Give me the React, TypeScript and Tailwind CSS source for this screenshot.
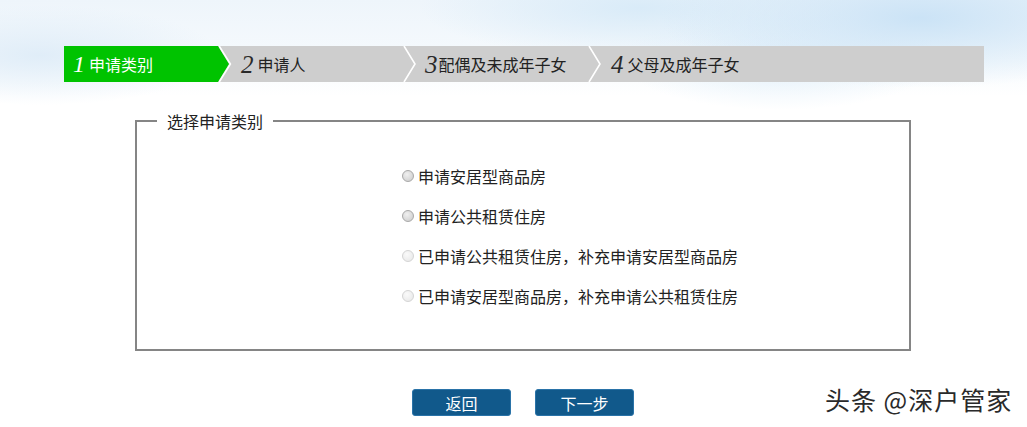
import React from "react";

const cjk = "font-['Microsoft_YaHei','Noto_Sans_CJK_SC',sans-serif]";

const steps = [
  { n: "2", label: "申请人", w: "w-[185px]", pl: "pl-[23px]", gap: "mr-[4px]" },
  { n: "3", label: "配偶及未成年子女", w: "w-[185px]", pl: "pl-[22px]", gap: "mr-[1px]" },
  { n: "4", label: "父母及成年子女", w: "flex-1", pl: "pl-[23px]", gap: "mr-[4px]" },
];

const options = [
  { label: "申请安居型商品房", disabled: false },
  { label: "申请公共租赁住房", disabled: false },
  { label: "已申请公共租赁住房，补充申请安居型商品房", disabled: true },
  { label: "已申请安居型商品房，补充申请公共租赁住房", disabled: true },
];

function Radio({ disabled }: { disabled: boolean }) {
  return (
    <span
      className={
        disabled
          ? "w-[12px] h-[12px] rounded-full border border-[#d4d4d4] bg-[radial-gradient(circle_at_40%_35%,#fafafa,#e6e6e6)]"
          : "w-[12px] h-[12px] rounded-full border border-[#a8a8a8] bg-[radial-gradient(circle_at_40%_35%,#f0f0f0,#c9c9c9)]"
      }
    />
  );
}

export default function App() {
  return (
    <div
      className={`relative w-[1027px] h-[427px] overflow-hidden bg-white bg-[image:radial-gradient(ellipse_260px_70px_at_920px_18px,#cbe3f6,transparent),radial-gradient(ellipse_220px_50px_at_640px_8px,#d9ebf8,transparent),radial-gradient(ellipse_160px_50px_at_780px_60px,#e2f0fa,transparent),radial-gradient(ellipse_180px_50px_at_40px_55px,#e0edf8,transparent),linear-gradient(to_bottom,#eef5fb,#f6fafd_60px,#ffffff_96px)] ${cjk}`}
    >
      <div className="pt-[46px] pl-[64px]">
        <div className="flex h-[36px] w-[920px] bg-[#cecece]">
          <div className="relative w-[154px] bg-[#00c300] flex items-center pl-[9px]">
            <span className="font-['Liberation_Serif',serif] italic text-[24px] leading-none text-white font-light mr-[4px]">1</span>
            <span className="text-[16px] text-white">申请类别</span>
            <svg className="absolute left-full top-0 z-10" width="14" height="36" viewBox="0 0 14 36">
              <polygon points="0,0 11,18 0,36" fill="#00c300" />
              <polyline points="1.2,0 12.4,18 1.2,36" fill="none" stroke="#ffffff" strokeWidth="1.6" />
            </svg>
          </div>
          {steps.map((s, i) => (
            <div key={s.n} className={`relative ${s.w} flex items-center ${s.pl}`}>
              <span className={`font-['Liberation_Serif',serif] italic text-[25px] leading-none text-[#2a2a2a] ${s.gap}`}>{s.n}</span>
              <span className="text-[16px] text-[#222]">{s.label}</span>
              {i < steps.length - 1 && (
                <svg className="absolute left-full top-0 z-10" width="14" height="36" viewBox="0 0 14 36">
                  <polyline points="1,0 12,18 1,36" fill="none" stroke="#ffffff" strokeWidth="1.6" />
                </svg>
              )}
            </div>
          ))}
        </div>
      </div>

      <fieldset className="ml-[135px] mt-[29px] w-[776px] border-2 border-[#858585] pt-[25px] pb-[33px]">
        <legend className="ml-[20px] px-[10px] text-[16px] leading-[20px] text-[#222]">选择申请类别</legend>
        <div className="flex flex-col pl-[265px]">
          {options.map((o) => (
            <label key={o.label} className="h-[40px] flex items-center gap-[4px] text-[16px] text-[#222]">
              <Radio disabled={o.disabled} />
              <span>{o.label}</span>
            </label>
          ))}
        </div>
      </fieldset>

      <div className="ml-[412px] mt-[38px] flex gap-[24px]">
        <button className="w-[99px] h-[27px] rounded-[3px] bg-[#11598b] border border-[#2a73a8] text-white text-[16px] leading-none">返回</button>
        <button className="w-[99px] h-[27px] rounded-[3px] bg-[#11598b] border border-[#2a73a8] text-white text-[16px] leading-none">下一步</button>
      </div>

      <div className="absolute left-[825px] top-[384px] text-[25px] tracking-[1px] leading-[30px] text-[#2a2a2a] [text-shadow:1px_1px_0_#fff,-1px_-1px_0_#fff]">
        头条 @深户管家
      </div>
    </div>
  );
}
